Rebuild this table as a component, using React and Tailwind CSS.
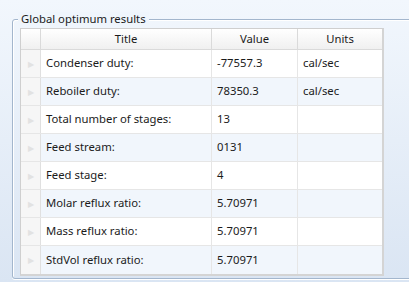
const rows = [
  { title: "Condenser duty:", value: "-77557.3", units: "cal/sec" },
  { title: "Reboiler duty:", value: "78350.3", units: "cal/sec" },
  { title: "Total number of stages:", value: "13", units: "" },
  { title: "Feed stream:", value: "0131", units: "" },
  { title: "Feed stage:", value: "4", units: "" },
  { title: "Molar reflux ratio:", value: "5.70971", units: "" },
  { title: "Mass reflux ratio:", value: "5.70971", units: "" },
  { title: "StdVol reflux ratio:", value: "5.70971", units: "" },
];

export default function App() {
  return (
    <div
      className="w-[409px] h-[282px] overflow-hidden bg-gradient-to-b from-[#f2f7fd] to-[#dae5f3] text-[11.3px] text-[#1b1b1b] pt-[19px] pl-[12px]"
      style={{ fontFamily: '"Noto Sans", "Liberation Sans", sans-serif' }}
    >
      {/* Group box (right edge runs off screen) */}
      <div className="relative w-[420px] h-[260px] border border-[#a3b6cd] rounded-[3px] pl-[7px] pt-[8px] shadow-[inset_1px_1px_0_#ffffff,0_1px_0_#ffffff]">
        <span className="absolute left-[5px] top-[-8px] px-[3px] leading-[14px] bg-[#eff5fc]">Global optimum results</span>

        {/* Grid */}
        <div className="w-[364px] border border-[#cfcfcf] border-r-2 border-b-2 border-r-[#d4d4d4] border-b-[#d4d4d4] bg-white">
          <div className="flex h-[21px] bg-gradient-to-b from-[#ffffff] to-[#f0f0f0] border-b border-[#dadada]">
            <div className="w-[20px] border-r border-[#dadada]"></div>
            <div className="w-[171px] border-r border-[#dadada] flex items-center justify-center">Title</div>
            <div className="w-[86px] border-r border-[#dadada] flex items-center justify-center">Value</div>
            <div className="flex-1 flex items-center justify-center">Units</div>
          </div>
          {rows.map((r, i) => (
            <div
              key={r.title}
              className={`flex h-[28px] border-b border-[#e6e6e6] last:border-b-0 ${i % 2 === 1 ? "bg-[#f1f6fc]" : "bg-white"}`}
            >
              <div className="w-[20px] bg-[#f6f6f6] border-r border-[#e0e0e0] flex items-center justify-center text-[8px] text-[#e2e2e2]">
                ▶
              </div>
              <div className="w-[171px] border-r border-[#e6e6e6] flex items-center pl-[5px]">{r.title}</div>
              <div className="w-[86px] border-r border-[#e6e6e6] flex items-center pl-[5px]">{r.value}</div>
              <div className="flex-1 flex items-center pl-[5px]">{r.units}</div>
            </div>
          ))}
        </div>
      </div>
    </div>
  );
}
